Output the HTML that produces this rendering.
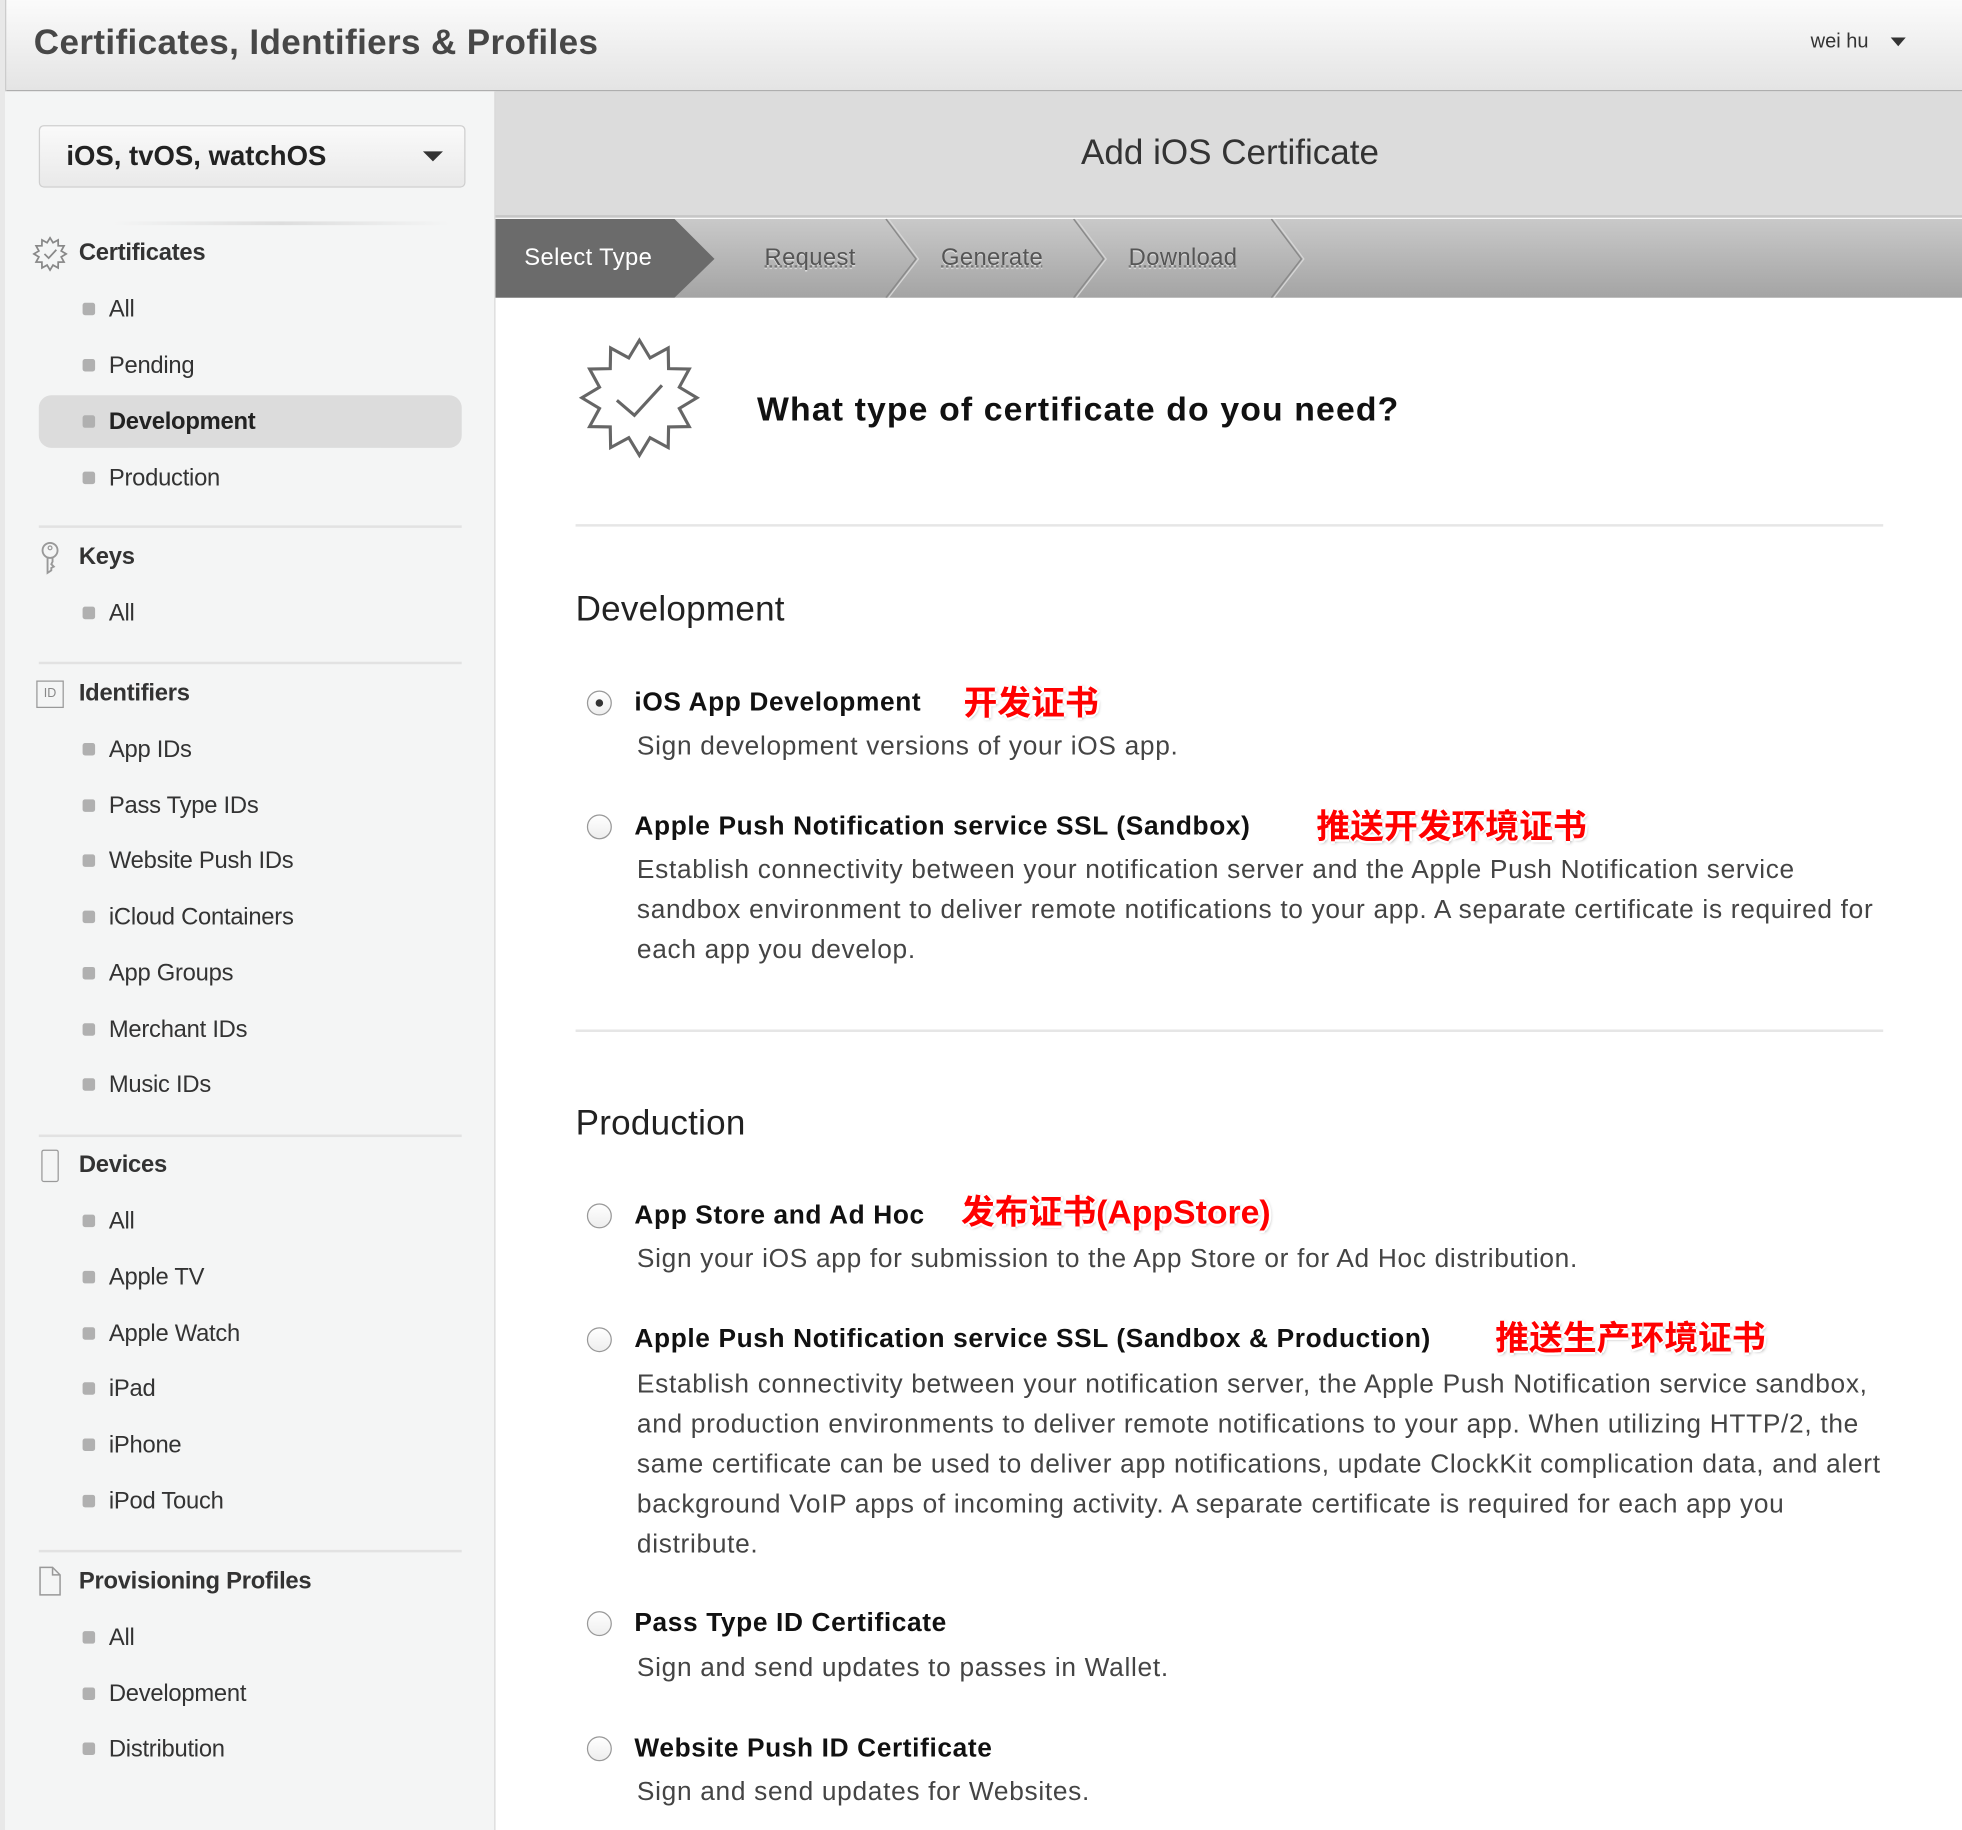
<!DOCTYPE html>
<html><head><meta charset="utf-8">
<style>
html,body{margin:0;padding:0;width:1962px;height:1830px;overflow:hidden;background:#fff}
#w{position:absolute;left:0;top:0;width:1568px;height:1463px;transform:scale(1.2513,1.2509);transform-origin:0 0;font-family:"Liberation Sans","Noto Sans CJK SC",sans-serif;color:#333;overflow:hidden}
.a{position:absolute;white-space:nowrap}
.hdr{left:0;top:0;width:1568px;height:72px;background:linear-gradient(#fbfbfb,#e4e4e4);border-bottom:1px solid #a9a9a9}
.side{left:4px;top:73px;width:391px;height:1390px;background:#f4f5f5;border-right:1px solid #d9d9d9}
.edge{left:0;top:0;width:4px;height:1463px;background:#e8e8e8;border-right:1px solid #ccc}
.it{font-size:19px;line-height:24px;color:#333;letter-spacing:-0.2px}
.sq{position:absolute;width:10px;height:10px;background:#b0b0b0;border-radius:2px}
.hd{font-size:19px;font-weight:bold;line-height:24px;color:#333;letter-spacing:-0.2px}
.dv{position:absolute;left:31px;width:338px;height:2px;background:#e2e2e2}
.t{font-size:21px;font-weight:bold;color:#111;line-height:26px;letter-spacing:0.5px}
.d{font-size:21px;color:#444;line-height:26px;letter-spacing:0.55px}
.r{position:absolute;width:20px;height:20px;border:1px solid #999;border-radius:50%;background:linear-gradient(#fff,#eee);box-sizing:border-box}
.cn{font-size:27px;font-weight:bold;color:#f00;line-height:32px;text-shadow:-2px 0 #fff,2px 0 #fff,0 -2px #fff,0 2px #fff,1px 1px 3px #888}
.st{font-size:19px;color:#555;line-height:24px;text-decoration:underline dotted #777;text-shadow:0 1px #ddd}
</style></head><body><div id="w">
<div class="a hdr"></div>
<div class="a" style="left:27px;top:17px;font-size:28px;font-weight:bold;color:#474747;line-height:34px;letter-spacing:0.3px">Certificates, Identifiers &amp; Profiles</div>
<div class="a" style="left:1447px;top:24px;font-size:16px;color:#333;line-height:20px">wei hu</div>
<div class="a" style="left:1511px;top:30px;width:0;height:0;border-left:6px solid transparent;border-right:6px solid transparent;border-top:7px solid #333"></div>
<div class="a edge"></div>
<div class="a side"></div>
<div class="a" style="left:31px;top:100px;width:339px;height:48px;border:1px solid #cfcfcf;border-radius:4px;background:linear-gradient(#fafafa,#e9e9e9)"></div>
<div class="a" style="left:53px;top:112px;font-size:22px;font-weight:bold;color:#222;line-height:26px">iOS, tvOS, watchOS</div>
<div class="a" style="left:338px;top:121px;width:0;height:0;border-left:8px solid transparent;border-right:8px solid transparent;border-top:8px solid #333"></div>
<div class="a" style="left:90px;top:177px;width:270px;height:3px;background:linear-gradient(90deg,#f4f5f5,#ddd,#f4f5f5)"></div>
<svg class="a" style="left:26px;top:189px" width="28" height="28" viewBox="-50 -50 100 100"><polygon fill="none" stroke="#888" stroke-width="5" points="0,-46 8.5,-31.9 23,-39.8 23.3,-23.3 39.8,-23 31.9,-8.5 46,0 31.9,8.5 39.8,23 23.3,23.3 23,39.8 8.5,31.9 0,46 -8.5,31.9 -23,39.8 -23.3,23.3 -39.8,23 -31.9,8.5 -46,0 -31.9,-8.5 -39.8,-23 -23.3,-23.3 -23,-39.8 -8.5,-31.9"/><polyline fill="none" stroke="#888" stroke-width="5" points="-16,0 -4,12 18,-12"/></svg>
<div class="a hd" style="left:63px;top:191px">Certificates</div>
<div class="a" style="left:31px;top:316px;width:338px;height:42px;background:#dcdcdc;border-radius:10px"></div>
<div class="sq" style="left:66px;top:242px"></div><div class="a it" style="left:87px;top:236px">All</div>
<div class="sq" style="left:66px;top:287px"></div><div class="a it" style="left:87px;top:281px">Pending</div>
<div class="sq" style="left:66px;top:332px"></div><div class="a it" style="left:87px;top:326px;font-weight:bold;color:#222">Development</div>
<div class="sq" style="left:66px;top:377px"></div><div class="a it" style="left:87px;top:371px">Production</div>
<div class="dv" style="top:420px"></div>
<svg class="a" style="left:30px;top:432px" width="20" height="28" viewBox="0 0 20 28"><circle cx="10" cy="8" r="6" fill="none" stroke="#999" stroke-width="1.5"/><circle cx="10" cy="6" r="1.5" fill="none" stroke="#999"/><path d="M8 14 V26 L11 24 V22 L13 21 L11 19 L12 17 V14" fill="none" stroke="#999" stroke-width="1.5"/></svg>
<div class="a hd" style="left:63px;top:434px">Keys</div>
<div class="sq" style="left:66px;top:485px"></div><div class="a it" style="left:87px;top:479px">All</div>
<div class="dv" style="top:529px"></div>
<div class="a" style="left:29px;top:544px;width:20px;height:20px;border:1px solid #999;font-size:10px;color:#888;line-height:20px;text-align:center">ID</div>
<div class="a hd" style="left:63px;top:543px">Identifiers</div>
<div class="sq" style="left:66px;top:594px"></div><div class="a it" style="left:87px;top:588px">App IDs</div>
<div class="sq" style="left:66px;top:639px"></div><div class="a it" style="left:87px;top:633px">Pass Type IDs</div>
<div class="sq" style="left:66px;top:683px"></div><div class="a it" style="left:87px;top:677px">Website Push IDs</div>
<div class="sq" style="left:66px;top:728px"></div><div class="a it" style="left:87px;top:722px">iCloud Containers</div>
<div class="sq" style="left:66px;top:773px"></div><div class="a it" style="left:87px;top:767px">App Groups</div>
<div class="sq" style="left:66px;top:818px"></div><div class="a it" style="left:87px;top:812px">Merchant IDs</div>
<div class="sq" style="left:66px;top:862px"></div><div class="a it" style="left:87px;top:856px">Music IDs</div>
<div class="dv" style="top:907px"></div>
<div class="a" style="left:33px;top:919px;width:12px;height:24px;border:1px solid #999;border-radius:2px"></div>
<div class="a hd" style="left:63px;top:920px">Devices</div>
<div class="sq" style="left:66px;top:971px"></div><div class="a it" style="left:87px;top:965px">All</div>
<div class="sq" style="left:66px;top:1016px"></div><div class="a it" style="left:87px;top:1010px">Apple TV</div>
<div class="sq" style="left:66px;top:1061px"></div><div class="a it" style="left:87px;top:1055px">Apple Watch</div>
<div class="sq" style="left:66px;top:1105px"></div><div class="a it" style="left:87px;top:1099px">iPad</div>
<div class="sq" style="left:66px;top:1150px"></div><div class="a it" style="left:87px;top:1144px">iPhone</div>
<div class="sq" style="left:66px;top:1195px"></div><div class="a it" style="left:87px;top:1189px">iPod Touch</div>
<div class="dv" style="top:1239px"></div>
<svg class="a" style="left:31px;top:1252px" width="18" height="24" viewBox="0 0 18 24"><path d="M1 1 H11 L17 7 V23 H1 Z M11 1 V7 H17" fill="none" stroke="#999" stroke-width="1.2"/></svg>
<div class="a hd" style="left:63px;top:1253px">Provisioning Profiles</div>
<div class="sq" style="left:66px;top:1304px"></div><div class="a it" style="left:87px;top:1298px">All</div>
<div class="sq" style="left:66px;top:1349px"></div><div class="a it" style="left:87px;top:1343px">Development</div>
<div class="sq" style="left:66px;top:1393px"></div><div class="a it" style="left:87px;top:1387px">Distribution</div>

<div class="a" style="left:396px;top:73px;width:1172px;height:99px;background:#dcdcdc;border-bottom:2px solid #c6c6c6"></div>
<div class="a" style="left:396px;top:105px;width:1174px;text-align:center;font-size:28px;color:#333;line-height:34px">Add iOS Certificate</div>
<div class="a" style="left:396px;top:175px;width:1172px;height:63px;background:linear-gradient(#c9c9c9,#a4a4a4)"></div>
<svg class="a" style="left:396px;top:175px" width="680" height="63"><polygon points="0,0 143,0 175,32 143,63 0,63" fill="#6b6b6b"/><g fill="none" stroke="#8a8a8a" stroke-width="1.2"><polyline points="312,0 336,32 312,63"/><polyline points="462,0 486,32 462,63"/><polyline points="620,0 644,32 620,63"/></g><g fill="none" stroke="#d6d6d6" stroke-width="1"><polyline points="314,0 338,32 314,63"/><polyline points="464,0 488,32 464,63"/><polyline points="622,0 646,32 622,63"/></g></svg>
<div class="a" style="left:419px;top:195px;font-size:19px;color:#fff;line-height:24px;letter-spacing:0.3px">Select Type</div>
<div class="a st" style="left:611px;top:195px;letter-spacing:0.3px">Request</div>
<div class="a st" style="left:752px;top:195px;letter-spacing:0.3px">Generate</div>
<div class="a st" style="left:902px;top:195px;letter-spacing:0.3px">Download</div>

<svg class="a" style="left:461px;top:268px" width="100" height="100" viewBox="-50 -50 100 100"><polygon fill="none" stroke="#666" stroke-width="2.5" points="0,-46 8.5,-31.9 23,-39.8 23.3,-23.3 39.8,-23 31.9,-8.5 46,0 31.9,8.5 39.8,23 23.3,23.3 23,39.8 8.5,31.9 0,46 -8.5,31.9 -23,39.8 -23.3,23.3 -39.8,23 -31.9,8.5 -46,0 -31.9,-8.5 -39.8,-23 -23.3,-23.3 -23,-39.8 -8.5,-31.9"/><polyline fill="none" stroke="#666" stroke-width="2.5" points="-18,2 -4,14 18,-10"/></svg>
<div class="a" style="left:605px;top:311px;font-size:27px;font-weight:bold;color:#111;line-height:32px;letter-spacing:0.9px">What type of certificate do you need?</div>
<div class="a" style="left:460px;top:419px;width:1045px;height:2px;background:#e6e6e6"></div>
<div class="a" style="left:460px;top:470px;font-size:28px;color:#222;line-height:34px;letter-spacing:0.2px">Development</div>

<div class="r" style="left:469px;top:552px"></div><div class="a" style="left:476px;top:559px;width:6px;height:6px;border-radius:50%;background:#333"></div>
<div class="a t" style="left:507px;top:549px">iOS App Development</div>
<div class="a cn" style="left:770px;top:546px">开发证书</div>
<div class="a d" style="left:509px;top:584px">Sign development versions of your iOS app.</div>

<div class="r" style="left:469px;top:651px"></div>
<div class="a t" style="left:507px;top:648px">Apple Push Notification service SSL (Sandbox)</div>
<div class="a cn" style="left:1052px;top:645px">推送开发环境证书</div>
<div class="a d" style="left:509px;top:683px">Establish connectivity between your notification server and the Apple Push Notification service</div>
<div class="a d" style="left:509px;top:715px">sandbox environment to deliver remote notifications to your app. A separate certificate is required for</div>
<div class="a d" style="left:509px;top:747px">each app you develop.</div>

<div class="a" style="left:460px;top:823px;width:1045px;height:2px;background:#e6e6e6"></div>
<div class="a" style="left:460px;top:881px;font-size:28px;color:#222;line-height:34px;letter-spacing:0.2px">Production</div>

<div class="r" style="left:469px;top:962px"></div>
<div class="a t" style="left:507px;top:959px">App Store and Ad Hoc</div>
<div class="a cn" style="left:768px;top:953px">发布证书(AppStore)</div>
<div class="a d" style="left:509px;top:994px">Sign your iOS app for submission to the App Store or for Ad Hoc distribution.</div>

<div class="r" style="left:469px;top:1061px"></div>
<div class="a t" style="left:507px;top:1058px">Apple Push Notification service SSL (Sandbox &amp; Production)</div>
<div class="a cn" style="left:1195px;top:1054px">推送生产环境证书</div>
<div class="a d" style="left:509px;top:1094px">Establish connectivity between your notification server, the Apple Push Notification service sandbox,</div>
<div class="a d" style="left:509px;top:1126px">and production environments to deliver remote notifications to your app. When utilizing HTTP/2, the</div>
<div class="a d" style="left:509px;top:1158px">same certificate can be used to deliver app notifications, update ClockKit complication data, and alert</div>
<div class="a d" style="left:509px;top:1190px">background VoIP apps of incoming activity. A separate certificate is required for each app you</div>
<div class="a d" style="left:509px;top:1222px">distribute.</div>

<div class="r" style="left:469px;top:1288px"></div>
<div class="a t" style="left:507px;top:1285px">Pass Type ID Certificate</div>
<div class="a d" style="left:509px;top:1321px">Sign and send updates to passes in Wallet.</div>

<div class="r" style="left:469px;top:1388px"></div>
<div class="a t" style="left:507px;top:1385px">Website Push ID Certificate</div>
<div class="a d" style="left:509px;top:1420px">Sign and send updates for Websites.</div>
</div></body></html>
